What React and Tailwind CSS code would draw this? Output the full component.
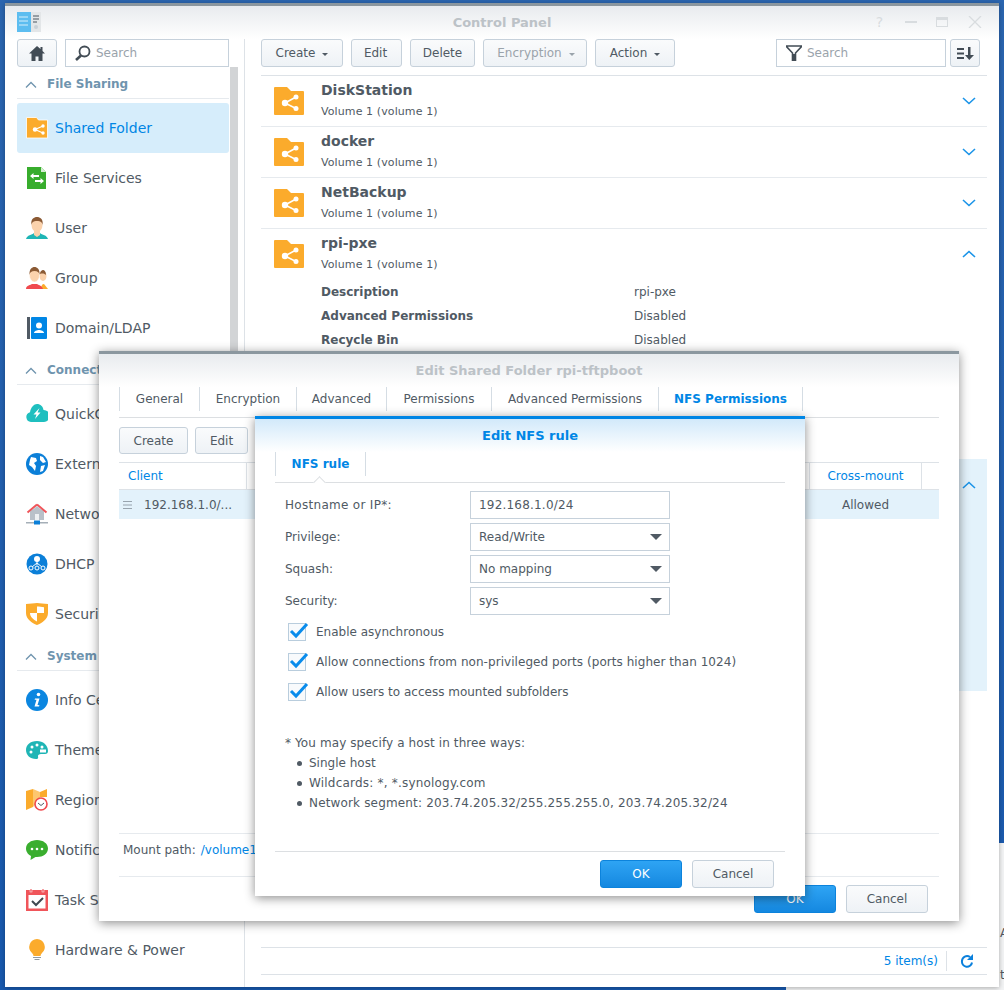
const sidebarGroups = [
  { title: 'File Sharing', items: [
    { name: 'Shared Folder', icon: 'sharedFolder', active: true },
    { name: 'File Services', icon: 'fileServices' },
    { name: 'User', icon: 'user' },
    { name: 'Group', icon: 'group' },
    { name: 'Domain/LDAP', icon: 'domain' },
  ] },
  { title: 'Connectivity', items: [
    { name: 'QuickConnect', icon: 'quickConnect' },
    { name: 'External Access', icon: 'external' },
    { name: 'Network', icon: 'network' },
    { name: 'DHCP Server', icon: 'dhcp' },
    { name: 'Security', icon: 'security' },
  ] },
  { title: 'System', items: [
    { name: 'Info Center', icon: 'info' },
    { name: 'Theme', icon: 'theme' },
    { name: 'Regional Options', icon: 'regional' },
    { name: 'Notification', icon: 'notification' },
    { name: 'Task Scheduler', icon: 'task' },
    { name: 'Hardware & Power', icon: 'hardware' },
  ] },
]

const folders = ['DiskStation', 'docker', 'NetBackup']

const SidebarIcon = ({ name }) => {
  const icons = {
    sharedFolder: (
      <>
        <path d="M.5.500h10l2 2.500h9v18H.5z" fill="#fbab2c" stroke="#fff" strokeWidth="0.8" />
        <path d="M9 12.500l8-3.500M9 12.500l8 3.500" stroke="#fff" strokeWidth="1.200" />
        <circle cx="9" cy="12.500" r="2.200" fill="#fff" />
        <circle cx="17" cy="9" r="1.700" fill="#fff" />
        <circle cx="17" cy="16" r="1.700" fill="#fff" />
      </>
    ),
    fileServices: (
      <>
        <path d="M1 0h14l5 5v17H1z" fill="#38ad2d" />
        <path d="M15 0l5 5h-5z" fill="#d5efd2" />
        <path d="M4 9l3.500-3v2H13v2H7.500v2zM18 14l-3.500-3v2H9v2h5.500v2z" fill="#fff" />
      </>
    ),
    user: (
      <>
        <path d="M0 22c1-4 6-4 8-6h6c2 2 7 2 8 6z" fill="#1eb5b5" />
        <path d="M8 14h6v4l-3 2-3-2z" fill="#fbd2ac" />
        <ellipse cx="11" cy="8" rx="5.500" ry="7" fill="#fbd2ac" />
        <path d="M5.400 8C4.500 2 8 0 11 0s6.500 2 5.600 8c-.5-3-2-4-5.600-4s-5 1-5.600 4z" fill="#8b5a34" />
      </>
    ),
    group: (
      <>
        <path d="M15 22c0-3 1-5 3-5l4 5z" fill="#fbab2c" />
        <ellipse cx="17" cy="9" rx="3.500" ry="5" fill="#fbd2ac" />
        <path d="M14 7c0-3 2-4 3-4s3 1 3 5c-1-1-3-2-6-1z" fill="#8b5a34" />
        <path d="M0 22c0-4 5-4 6-5h5c1 1 5 1 6 5z" fill="#f0494e" />
        <ellipse cx="8.500" cy="8" rx="5" ry="7" fill="#fbd2ac" stroke="#fff" strokeWidth="0.500" />
        <path d="M3.500 8C3 2 6 0 8.500 0s5.500 2 5 8c-.5-3-2-4-5-4s-4.500 1-5 4z" fill="#8b5a34" />
      </>
    ),
    domain: (
      <>
        <rect x="1" y="0" width="3" height="22" fill="#505a64" />
        <rect x="5" y="0" width="16" height="22" rx="1" fill="#0086e5" />
        <circle cx="13" cy="8.500" r="3" fill="#fff" />
        <path d="M8 16c0-2 3-3 5-3s5 1 5 3z" fill="#fff" />
      </>
    ),
    quickConnect: (
      <>
        <path d="M5 19a5 5 0 01-1-9.800C5 4 8 1 11 1c3.500 0 6 2.500 6.500 6a6 6 0 01.5 12z" fill="#1fbfbf" />
        <path d="M13.500 5l-6 6.500h3L9 16l5.500-6.500h-3z" fill="#fff" />
      </>
    ),
    external: (
      <>
        <circle cx="11" cy="11" r="11" fill="#0b7fd8" />
        <path d="M5 4l5 1 1 3-3 2 2 3-1 5-3-4-3-2 1-5zM14 3l3 1 3 5-3 1-3-3zM15 13l4-1-2 6-3 1z" fill="#fff" />
      </>
    ),
    network: (
      <>
        <path d="M4 6.500h14V17H4z" fill="#b9c1c9" />
        <path d="M11 1.500l-9.500 8M11 1.500l9.500 8" stroke="#f0555a" strokeWidth="2" />
        <path d="M11 3l7 6v1H4V9z" fill="#b9c1c9" />
        <rect x="9" y="11" width="4" height="6" fill="#eef1f3" />
        <rect x="0" y="19" width="22" height="1.500" fill="#a5afb8" />
        <rect x="8" y="17.500" width="6" height="4" fill="#0b7fd8" />
      </>
    ),
    dhcp: (
      <>
        <circle cx="11" cy="11" r="10.500" fill="#0b7fd8" />
        <path d="M11 7v5M11 10l-5 4M11 10l5 4" stroke="#fff" strokeWidth="1" />
        <circle cx="11" cy="6" r="3" fill="#fff" />
        <circle cx="5" cy="15" r="2" fill="#0b7fd8" stroke="#fff" />
        <circle cx="11" cy="15" r="2" fill="#0b7fd8" stroke="#fff" />
        <circle cx="17" cy="15" r="2" fill="#0b7fd8" stroke="#fff" />
      </>
    ),
    security: (
      <>
        <path d="M0 1c4 0 8-1 11-1s7 1 11 1v9c0 6-6 10-11 12C6 20 0 16 0 10z" fill="#fbab2c" />
        <path d="M11 3.500c2 0 5 .5 7 .8V10h-7zM4 10h7v8.500c-3.500-2-7-4.500-7-8.500z" fill="#fff" />
      </>
    ),
    info: (
      <>
        <circle cx="11" cy="11" r="11" fill="#0b86e0" />
        <circle cx="12.500" cy="5.500" r="1.800" fill="#fff" />
        <path d="M9 9.500h4.500L11.500 16l2 .2-.5 1.300H8.500l2-6.700H8.600z" fill="#fff" />
      </>
    ),
    theme: (
      <>
        <path d="M11 2C4 2 0 6 0 11s4 9 10 9c3 0 2-2 2-3s1-2 3-2h4c2 0 3-1 3-3 0-6-5-10-11-10z" fill="#1fb5b5" />
        <circle cx="6" cy="8" r="1.500" fill="#fff" />
        <circle cx="11" cy="6" r="1.500" fill="#fff" />
        <circle cx="16" cy="8" r="1.500" fill="#fff" />
        <circle cx="5" cy="13" r="1.500" fill="#fff" />
        <path d="M14 10.500h6v3h-6z" fill="#fff" />
      </>
    ),
    regional: (
      <>
        <path d="M0 2l7-2v18l-7 3z" fill="#fbab2c" />
        <path d="M7 0l7 3v8l-7 7z" fill="#fdc76f" />
        <path d="M14 3l7-3v8h-7z" fill="#fbab2c" />
        <circle cx="15" cy="15" r="6" fill="#fff" stroke="#f0494e" strokeWidth="1.600" />
        <path d="M12 14l3 2.500 3-2.500" fill="none" stroke="#505a64" />
      </>
    ),
    notification: (
      <>
        <path d="M11 1C5 1 0 4.500 0 9.500c0 4 3 6.500 5 7.500l-.5 4 5-3H11c6 0 11-3.500 11-8.500S17 1 11 1z" fill="#3aae2f" />
        <circle cx="6" cy="10" r="1.300" fill="#fff" />
        <circle cx="11" cy="10" r="1.300" fill="#fff" />
        <circle cx="16" cy="10" r="1.300" fill="#fff" />
      </>
    ),
    task: (
      <>
        <rect x="0" y="1" width="22" height="21" fill="#f0555a" />
        <rect x="2.500" y="6" width="17" height="13.500" fill="#fff" />
        <rect x="4" y="0" width="2" height="3" fill="#f0555a" stroke="#fff" strokeWidth="0.500" />
        <rect x="16" y="0" width="2" height="3" fill="#f0555a" stroke="#fff" strokeWidth="0.500" />
        <path d="M6 12l4 4 7-7" fill="none" stroke="#3f4850" strokeWidth="2" />
      </>
    ),
    hardware: (
      <>
        <path d="M11 0a8 8 0 00-5 14c1 1 1.500 2 1.500 3h7c0-1 .5-2 1.500-3a8 8 0 00-5-14z" fill="#fbab2c" />
        <rect x="7" y="18" width="8" height="1" fill="#8f9aa3" />
        <rect x="8.500" y="20" width="5" height="1" fill="#8f9aa3" />
      </>
    ),
  }
  return (
    <svg width="22" height="22" viewBox="0 0 22 22" className="shrink-0">
      {icons[name]}
    </svg>
  )
}

const FolderIcon = () => (
  <svg width="30" height="28" viewBox="0 0 30 28" className="shrink-0">
    <path d="M0 1a1 1 0 011-1h12l4 4h12a1 1 0 011 1v22a1 1 0 01-1 1H1a1 1 0 01-1-1z" fill="#fbab2c" />
    <path d="M11 16l11-6M11 16l11 5.500" stroke="#fff" strokeWidth="1.500" />
    <circle cx="11" cy="16" r="3.200" fill="#fff" />
    <circle cx="22" cy="10" r="2.500" fill="#fff" />
    <circle cx="22" cy="21.500" r="2.500" fill="#fff" />
  </svg>
)

const Chevron = ({ up, className }) => (
  <svg width="14" height="8" viewBox="0 0 14 8" className={className}>
    <path d={up ? 'M1 7l6-5.500L13 7' : 'M1 1l6 5.500L13 1'} fill="none" stroke={'#1b94e8'} strokeWidth="1.600" />
  </svg>
)

const Caret = () => (
  <svg width="6" height="3" viewBox="0 0 6 3" className="ml-[7px] mt-[2px]">
    <path d="M0 0h6L3 3z" fill="currentColor" />
  </svg>
)

const ToolButton = ({ children, className = '', disabled, caret }) => (
  <button className={`flex h-[28px] items-center justify-center rounded-[3px] border border-[#c6d1db] bg-gradient-to-b from-[#fafbfc] to-[#eef2f6] text-[12px] ${disabled ? 'text-[#9aa3ab]' : 'text-[#505a64]'} ${className}`}>
    {children}
    {caret && <Caret />}
  </button>
)

const PrimaryButton = ({ children, className = '' }) => (
  <button className={`flex h-[28px] w-[82px] items-center justify-center rounded-[3px] border border-[#0c83dc] bg-gradient-to-b from-[#2ea4f4] to-[#1488e0] text-[12px] text-white ${className}`}>
    {children}
  </button>
)

const Tab = ({ children, active, className = '' }) => (
  <div className={`flex h-[24px] items-center justify-center border-r border-[#d5dde4] text-[12px] ${active ? 'font-bold text-[#0086e5]' : 'text-[#505a64]'} ${className}`}>
    {children}
  </div>
)

const SelectBox = ({ value }) => (
  <div className="flex h-[28px] w-[200px] items-center justify-between border border-[#c6d1db] pl-[8px] pr-[7px] text-[12px] text-[#505a64]">
    {value}
    <svg width="12" height="6" viewBox="0 0 12 6">
      <path d="M0 0h12L6 6z" fill="#505a64" />
    </svg>
  </div>
)

const FormRow = ({ label, children }) => (
  <div className="flex items-center">
    <div className="w-[195px] pl-[10px] text-[12px] text-[#505a64]">{label}</div>
    {children}
  </div>
)

const CheckRow = ({ children }) => (
  <div className="flex h-[18px] items-center pl-[13px]">
    <div className="relative h-[18px] w-[18px] border border-[#b9cddd] bg-[#f8fafc]">
      <svg width="20" height="18" viewBox="0 0 20 18" className="absolute -top-[2px] left-0">
        <path d="M2 9l5 5L18 2" fill="none" stroke="#0a8cec" strokeWidth="3" />
      </svg>
    </div>
    <span className="ml-[10px] text-[12px] text-[#505a64]">{children}</span>
  </div>
)

const NoteItem = ({ children, className = '' }) => (
  <li className={`flex items-center ${className}`}>
    <span className="ml-[12px] mr-[7px] h-[5px] w-[5px] rounded-full bg-[#505a64]" />
    {children}
  </li>
)

const App = () => {
  return (
    <div className="relative h-[990px] w-[1004px] overflow-hidden bg-gradient-to-b from-[#2b66b0] to-[#1859ae] font-['DejaVu_Sans',sans-serif]">
      {/* window behind the control panel */}
      <div className="absolute left-[786px] top-[843px] h-[147px] w-[218px] bg-[#f3f4f5] pl-[214px] pt-[81px] text-[12px] leading-[18px] text-[#505a64]">
        <div>A</div>
        <div className="mt-[24px]">ti-</div>
      </div>

      {/* Control Panel window */}
      <div className="absolute left-[5px] top-[3px] flex h-[984px] w-[994px] flex-col border-t-[3px] border-[#8b979f] bg-white shadow-[0_1px_5px_rgba(0,0,0,0.3)]">
        <div className="relative flex h-[33px] shrink-0 items-center justify-center bg-gradient-to-b from-[#e8ebee] to-white">
          <svg width="24" height="21" viewBox="0 0 24 21" className="absolute left-[12px] top-[6px]">
            <rect x="0" y="0" width="14" height="20" fill="#5cbdf0" />
            <rect x="14" y="0" width="10" height="20" fill="#e3e6e8" />
            <path d="M2 5h9M2 9h9M2 13h9" stroke="#d5effb" strokeWidth="1" />
            <path d="M16 4h6M16 7h6M16 10h4" stroke="#4b5660" strokeWidth="1" />
            <circle cx="19" cy="15" r="2" fill="#c8d0d6" />
          </svg>
          <span className="text-[13px] font-bold text-[#bcc2c7]">Control Panel</span>
          <div className="absolute left-[869px] top-[9px] flex h-[14px] w-[108px] items-center justify-between">
            <span className="w-[11px] text-center text-[14px] leading-[14px] text-[#d8dcdf]">?</span>
            <div className="h-[2px] w-[12px] bg-[#d8dcdf]" />
            <div className="h-[10px] w-[12px] border-x border-b border-t-[3px] border-[#d8dcdf]" />
            <svg width="14" height="12" viewBox="0 0 14 12">
              <path d="M1 0l12 12M13 0L1 12" stroke="#d8dcdf" strokeWidth="1.300" />
            </svg>
          </div>
        </div>

        <div className="flex min-h-0 flex-1">
          {/* Sidebar */}
          <div className="relative w-[240px] shrink-0 border-r border-[#dde2e7] pl-[12px]">
            <div className="flex h-[28px] w-[212px] gap-[8px]">
              <button className="flex h-[28px] w-[40px] items-center justify-center rounded-[3px] border border-[#c6d1db] bg-gradient-to-b from-[#fafbfc] to-[#eef2f6]">
                <svg width="16" height="15" viewBox="0 0 16 15">
                  <path d="M8 0L0 7.500h2.500V15h4v-4.500h3V15h4V7.500H16l-2.500-2.500V1h-2v2z" fill="#424c55" />
                </svg>
              </button>
              <div className="flex h-[28px] flex-1 items-center border border-[#c6d1db] pl-[9px] text-[12px] text-[#9aa3ab]">
                <svg width="16" height="16" viewBox="0 0 16 16" className="mr-[5px]">
                  <circle cx="9.500" cy="6.500" r="5" fill="none" stroke="#424c55" strokeWidth="1.800" />
                  <path d="M6 10.500L1 15" stroke="#424c55" strokeWidth="2.600" />
                </svg>
                Search
              </div>
            </div>
            <div className="absolute left-[225px] top-[28px] h-[520px] w-[8px] bg-[#d2d4d6]" />
            <div className="w-[212px]">
              {sidebarGroups.map((group) => (
                <div key={group.title}>
                  <div className="mb-[4px] flex h-[32px] items-center border-b border-[#e6eaee] pl-[8px] pt-[3px]">
                    <svg width="12" height="7" viewBox="0 0 12 7">
                      <path d="M1 6.500l5-5 5 5" fill="none" stroke="#6f94ae" strokeWidth="1.300" />
                    </svg>
                    <span className="ml-[10px] text-[12px] font-bold text-[#6f94ae]">{group.title}</span>
                  </div>
                  {group.items.map((item) => (
                    <div
                      key={item.name}
                      className={`flex h-[50px] items-center rounded-[3px] pl-[9px] text-[14px] ${item.active ? 'bg-[#d6edfb] text-[#0086e5]' : 'text-[#505a64]'}`}
                    >
                      <SidebarIcon name={item.icon} />
                      <span className="ml-[7px]">{item.name}</span>
                    </div>
                  ))}
                </div>
              ))}
            </div>
          </div>

          {/* Main pane */}
          <div className="flex min-w-0 flex-1 flex-col pl-[16px] pr-[12px]">
            <div className="flex h-[28px] shrink-0 gap-[8px]">
              <ToolButton caret className="w-[82px]">Create</ToolButton>
              <ToolButton className="w-[51px] pr-[2px]">Edit</ToolButton>
              <ToolButton className="w-[65px]">Delete</ToolButton>
              <ToolButton caret disabled className="w-[104px] pl-[2px]">Encryption</ToolButton>
              <ToolButton caret className="w-[80px]">Action</ToolButton>
              <div className="ml-[93px] flex h-[28px] w-[170px] items-center border border-[#c6d1db] pl-[9px] text-[12px] text-[#9aa3ab]">
                <svg width="16" height="16" viewBox="0 0 16 16" className="mr-[5px]">
                  <path d="M0 1h16L9.500 8v8h-3V8z" fill="none" stroke="#424c55" strokeWidth="1.600" />
                  <path d="M6.500 9h3v7h-3z" fill="#424c55" />
                </svg>
                Search
              </div>
              <button className="-ml-[4px] flex h-[28px] w-[30px] items-center justify-center rounded-[3px] border border-[#c6d1db] bg-gradient-to-b from-[#fafbfc] to-[#eef2f6]">
                <svg width="17" height="13" viewBox="0 0 17 13">
                  <path d="M0 1h7v2H0zM0 5.500h7v2H0zM0 10h7v2H0z" fill="#424c55" />
                  <path d="M11 0h2.500v8H17l-4.750 5L8 8h3z" fill="#424c55" />
                </svg>
              </button>
            </div>

            <div className="mt-[8px] flex min-h-0 flex-1 flex-col border-t border-[#dde2e7]">
              {folders.map((name) => (
                <div key={name} className="flex h-[51px] shrink-0 items-start border-b border-[#e6eaee] pl-[13px] pt-[11px]">
                  <FolderIcon />
                  <div className="-mt-[5px] ml-[17px] flex-1">
                    <div className="text-[14px] font-bold leading-[16px] text-[#505a64]">{name}</div>
                    <div className="mt-[7px] text-[11px] leading-[14px] tracking-[0.1px] text-[#505a64]">Volume 1 (volume 1)</div>
                  </div>
                  <Chevron className="mr-[11px] mt-[10px]" />
                </div>
              ))}
              <div className="h-[230px] shrink-0 pl-[13px] pt-[11px]">
                <div className="flex items-start">
                  <FolderIcon />
                  <div className="-mt-[5px] ml-[17px] flex-1">
                    <div className="text-[14px] font-bold leading-[16px] text-[#505a64]">rpi-pxe</div>
                    <div className="mt-[7px] text-[11px] leading-[14px] tracking-[0.1px] text-[#505a64]">Volume 1 (volume 1)</div>
                  </div>
                  <Chevron up className="mr-[11px] mt-[10px]" />
                </div>
                <div className="ml-[47px] mt-[13px] grid grid-cols-[313px_1fr] gap-y-[10px] text-[12px] leading-[14px] text-[#505a64]">
                  <span className="font-bold">Description</span>
                  <span>rpi-pxe</span>
                  <span className="font-bold">Advanced Permissions</span>
                  <span>Disabled</span>
                  <span className="font-bold">Recycle Bin</span>
                  <span>Disabled</span>
                </div>
              </div>
              <div className="flex h-[232px] shrink-0 items-start justify-end bg-[#e3f2fb] pr-[11px] pt-[22px]">
                <Chevron up />
              </div>
              <div className="flex-1" />
              <div className="flex h-[28px] shrink-0 items-center justify-end border-y border-[#dde2e7] text-[12px] text-[#0086e5]">
                <span>5 item(s)</span>
                <div className="ml-[8px] h-[20px] w-px bg-[#dde2e7]" />
                <svg width="14" height="14" viewBox="0 0 14 14" className="ml-[13px] mr-[13px]">
                  <path d="M12 8.500A5 5 0 112 7a5 5 0 018-4" fill="none" stroke="#0b80dc" strokeWidth="2" />
                  <path d="M13 0v6H7z" fill="#0b80dc" />
                </svg>
              </div>
              <div className="h-[12px] shrink-0" />
            </div>
          </div>
        </div>
      </div>

      {/* Edit Shared Folder dialog */}
      <div className="absolute left-[99px] top-[351px] flex h-[570px] w-[860px] flex-col border-t-[3px] border-[#8b979f] bg-white px-[20px] shadow-[0_2px_10px_rgba(0,0,0,0.45)]">
        <div className="-mx-[20px] flex h-[33px] shrink-0 items-center justify-center bg-gradient-to-b from-[#e8ebee] to-white">
          <span className="text-[13px] font-bold text-[#bcc2c7]">Edit Shared Folder rpi-tftpboot</span>
        </div>
        <div className="flex h-[31px] shrink-0 items-start border-b border-[#dcdfe2]">
          <div className="h-[24px] border-l border-[#d5dde4]" />
          <Tab className="w-[80px]">General</Tab>
          <Tab className="w-[97px]">Encryption</Tab>
          <Tab className="w-[90px]">Advanced</Tab>
          <Tab className="w-[105px]">Permissions</Tab>
          <Tab className="w-[167px]">Advanced Permissions</Tab>
          <Tab active className="w-[144px]">NFS Permissions</Tab>
        </div>
        <div className="mt-[9px] flex shrink-0 gap-[7px]">
          <ToolButton className="!h-[27px] w-[69px]">Create</ToolButton>
          <ToolButton className="!h-[27px] w-[53px]">Edit</ToolButton>
        </div>
        <div className="mt-[8px] flex h-[28px] shrink-0 border-y border-[#dde2e7] text-[12px] text-[#0086e5]">
          <div className="flex w-[128px] items-center border-r border-[#dde2e7] pl-[9px]">Client</div>
          <div className="w-[562px]" />
          <div className="flex w-[113px] items-center justify-center border-x border-[#dde2e7]">Cross-mount</div>
        </div>
        <div className="flex h-[29px] shrink-0 items-center bg-[#e3f2fb] text-[12px] text-[#505a64]">
          <svg width="9" height="8" viewBox="0 0 9 8" className="ml-[4px]">
            <path d="M0 .5h9M0 4h9M0 7.500h9" stroke="#98a4ae" strokeWidth="1" />
          </svg>
          <span className="ml-[12px] w-[665px]">192.168.1.0/...</span>
          <span className="w-[113px] text-center">Allowed</span>
        </div>
        <div className="flex-1" />
        <div className="flex h-[44px] shrink-0 items-start border-y border-[#e6eaee] pl-[4px] pt-[7px] text-[12px] text-[#505a64]">
          Mount path:<span className="ml-[5px] text-[#0086e5]">/volume1/rpi-tftpboot</span>
        </div>
        <div className="flex h-[44px] shrink-0 items-start justify-end gap-[10px] pr-[11px] pt-[8px]">
          <PrimaryButton>OK</PrimaryButton>
          <ToolButton className="w-[82px]">Cancel</ToolButton>
        </div>
      </div>

      {/* Edit NFS rule dialog */}
      <div className="absolute left-[255px] top-[416px] flex h-[480px] w-[550px] flex-col border-t-[3px] border-[#0086e5] bg-white px-[20px] shadow-[0_2px_10px_rgba(0,0,0,0.45)]">
        <div className="-mx-[20px] flex h-[33px] shrink-0 items-center justify-center bg-gradient-to-b from-[#d2e9fa] to-white">
          <span className="text-[13px] font-bold text-[#0086e5]">Edit NFS rule</span>
        </div>
        <div className="relative flex h-[31px] shrink-0 items-start border-b border-[#dcdfe2]">
          <div className="h-[24px] border-l border-[#d5dde4]" />
          <Tab active className="w-[90px]">NFS rule</Tab>
          <div className="absolute -bottom-[5px] left-[40px] h-[9px] w-[9px] rotate-45 border-l border-t border-[#dcdfe2] bg-white" />
        </div>
        <div className="mt-[8px] flex shrink-0 flex-col gap-[4px]">
          <FormRow label={<span className="tracking-[0.3px]">Hostname or IP*:</span>}>
            <div className="flex h-[28px] w-[200px] items-center border border-[#c6d1db] pl-[8px] text-[12px] tracking-[0.2px] text-[#505a64]">192.168.1.0/24</div>
          </FormRow>
          <FormRow label="Privilege:"><SelectBox value="Read/Write" /></FormRow>
          <FormRow label="Squash:"><SelectBox value="No mapping" /></FormRow>
          <FormRow label="Security:"><SelectBox value="sys" /></FormRow>
        </div>
        <div className="mt-[8px] flex shrink-0 flex-col gap-[12px]">
          <CheckRow>Enable asynchronous</CheckRow>
          <CheckRow><span className="tracking-[0.05px]">Allow connections from non-privileged ports (ports higher than 1024)</span></CheckRow>
          <CheckRow>Allow users to access mounted subfolders</CheckRow>
        </div>
        <div className="mt-[32px] shrink-0 pl-[10px] text-[12px] leading-[20px] text-[#505a64]">
          <div className="tracking-[0.1px]">* You may specify a host in three ways:</div>
          <ul>
            <NoteItem>Single host</NoteItem>
            <NoteItem className="tracking-[0.2px]">Wildcards: *, *.synology.com</NoteItem>
            <NoteItem className="tracking-[0.16px]">Network segment: 203.74.205.32/255.255.255.0, 203.74.205.32/24</NoteItem>
          </ul>
        </div>
        <div className="flex-1" />
        <div className="flex h-[45px] shrink-0 items-start justify-end gap-[10px] border-t border-[#dcdfe2] pr-[11px] pt-[8px]">
          <PrimaryButton>OK</PrimaryButton>
          <ToolButton className="w-[82px]">Cancel</ToolButton>
        </div>
      </div>
    </div>
  )
}

export default App
